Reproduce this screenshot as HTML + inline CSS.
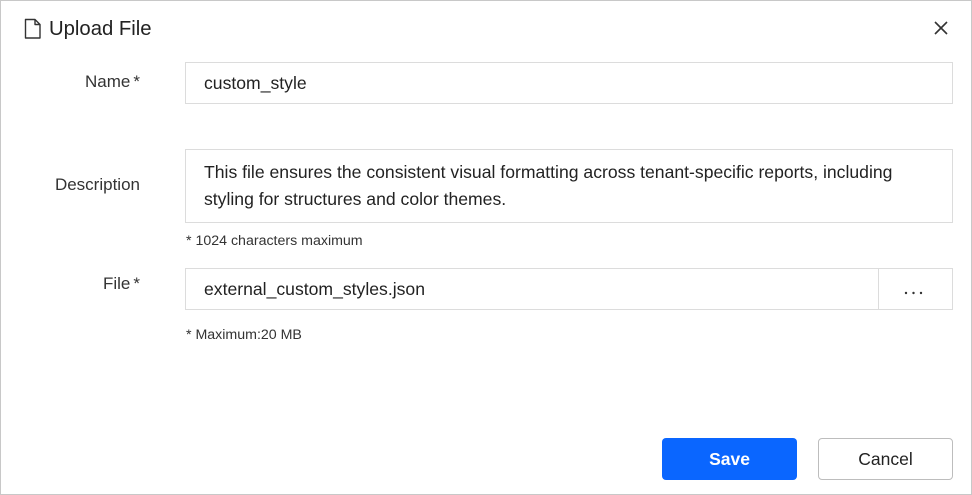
<!DOCTYPE html>
<html><head><style>
*{box-sizing:border-box;margin:0;padding:0}
body{width:972px;height:495px;background:#fff;font-family:"Liberation Sans",sans-serif;color:#222;position:relative;overflow:hidden}
.frame{position:absolute;left:0;top:0;width:972px;height:495px;border:1px solid #c8c8c8}
.a{position:absolute}
.lbl{font-size:17px;color:#333;text-align:right;width:140px;left:0}
.box{border:1px solid #dcdcdc;background:#fff;font-size:17.6px;color:#222;white-space:nowrap}
.hint{font-size:14.2px;color:#333}
</style></head><body>
<div class="frame"></div>
<svg class="a" style="left:23px;top:18px" width="20" height="22" viewBox="0 0 20 22"><path d="M2.5 1.5h9.5l5 5v13.5h-14.5z M12 1.5v5h5" fill="none" stroke="#333" stroke-width="1.4" stroke-linejoin="round"/></svg>
<div class="a" style="left:49px;top:18px;font-size:20.3px;color:#222">Upload File</div>
<svg class="a" style="left:934px;top:21px" width="14" height="14" viewBox="0 0 14 14"><path d="M1 1L13 13M13 1L1 13" stroke="#333" stroke-width="1.6"/></svg>
<div class="a lbl" style="top:72px">Name<span style="margin-left:3px">*</span></div>
<div class="a box" style="left:185px;top:62px;width:768px;height:42px;padding:10px 18px">custom_style</div>
<div class="a lbl" style="top:175px">Description</div>
<div class="a box" style="left:185px;top:149px;width:768px;height:74px;padding:9px 18px;line-height:27px">This file ensures the consistent visual formatting across tenant-specific reports, including<br>styling for structures and color themes.</div>
<div class="a hint" style="left:186px;top:233px">* 1024 characters maximum</div>
<div class="a lbl" style="top:274px">File<span style="margin-left:3px">*</span></div>
<div class="a box" style="left:185px;top:268px;width:694px;height:42px;padding:10px 18px">external_custom_styles.json</div>
<svg class="a" style="left:904px;top:291px" width="20" height="4" viewBox="0 0 20 4"><circle cx="2" cy="2" r="1.2" fill="#333"/><circle cx="9.5" cy="2" r="1.2" fill="#333"/><circle cx="17" cy="2" r="1.2" fill="#333"/></svg>
<div class="a" style="left:878px;top:268px;width:75px;height:42px;border:1px solid #dcdcdc"></div>
<div class="a hint" style="left:186px;top:327px">* Maximum:20 MB</div>
<div class="a" style="left:662px;top:438px;width:135px;height:42px;background:#0a66ff;border-radius:4px;color:#fff;font-weight:bold;font-size:17.5px;text-align:center;line-height:43px">Save</div>
<div class="a" style="left:818px;top:438px;width:135px;height:42px;border:1px solid #bdbdbd;border-radius:4px;color:#222;font-size:17.5px;text-align:center;line-height:41px">Cancel</div>
</body></html>
